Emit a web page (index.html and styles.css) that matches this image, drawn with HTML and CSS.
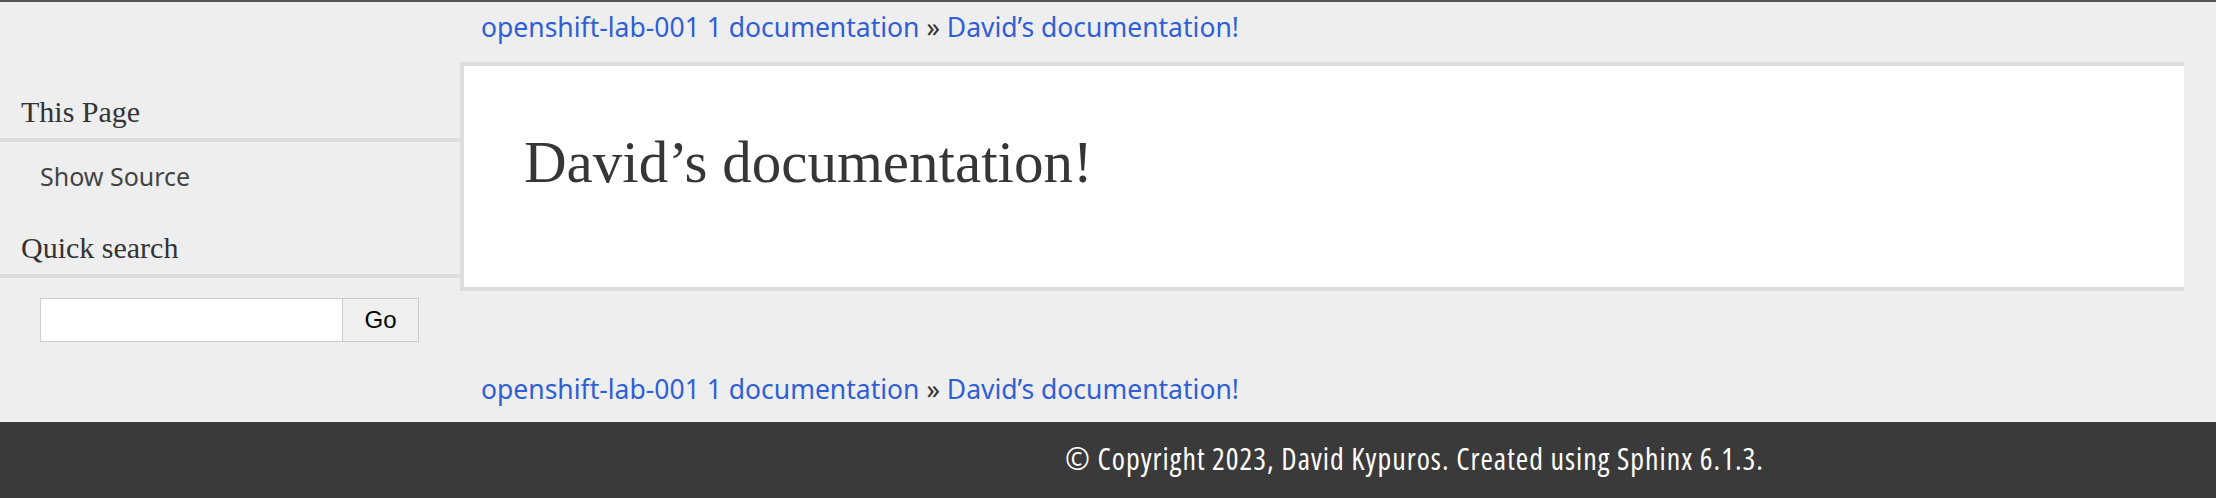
FILE: index.html
```html
<!DOCTYPE html>
<html lang="en">
<head>
<meta charset="utf-8">
<title>David’s documentation! — openshift-lab-001 1 documentation</title>
<link rel="stylesheet" href="styles.css">
</head>
<body>
<div class="related">
  <a href="#">openshift-lab-001 1 documentation</a> <span class="sep">»</span> <a href="#">David’s documentation!</a>
</div>
<div class="main">
  <aside class="sidebar">
    <h3 class="side-title">This Page</h3>
    <ul class="side-list">
      <li><a href="#">Show Source</a></li>
    </ul>
    <h3 class="side-title side-title-2">Quick search</h3>
    <form class="search">
      <input class="search-input" type="text" aria-label="search">
      <button class="search-btn" type="button">Go</button>
    </form>
  </aside>
  <section class="document">
    <h1 class="doc-title">David’s documentation!</h1>
  </section>
</div>
<div class="related related-bottom">
  <a href="#">openshift-lab-001 1 documentation</a> <span class="sep">»</span> <a href="#">David’s documentation!</a>
</div>
<footer class="footer">© Copyright 2023, David Kypuros. Created using Sphinx 6.1.3.</footer>
</body>
</html>
```
FILE: styles.css
```css
html, body {
  margin: 0;
  padding: 0;
}
body {
  background: #eeeeee;
  border-top: 2px solid #555555;
  font-family: "Noto Sans", "Open Sans", sans-serif;
  color: #333333;
}
a {
  color: #2f5fd6;
  text-decoration: none;
}
.related {
  padding: 8px 32px 18px 481px;
  font-size: 26.5px;
  line-height: 34px;
  white-space: nowrap;
}
.related .sep {
  color: #333333;
}
.related-bottom {
  padding-top: 30px;
  padding-bottom: 16px;
}
.main {
  display: flex;
  align-items: flex-start;
  margin-right: 32px;
}
.sidebar {
  width: 460px;
  flex: none;
}
.side-title {
  margin: 30px 0 0 0;
  padding: 0 0 6px 21px;
  font-family: "Liberation Serif", serif;
  font-weight: normal;
  font-size: 30px;
  line-height: 40px;
  color: #333333;
  border-bottom: 4px solid #dddddd;
}
.side-title-2 {
  margin-top: 34px;
}
.side-list {
  list-style: none;
  margin: 16px 0 0 0;
  padding: 0 0 0 40px;
  font-size: 25px;
  line-height: 36px;
}
.side-list a {
  color: #444444;
}
.search {
  display: flex;
  margin: 20px 0 0 40px;
}
.search-input {
  box-sizing: border-box;
  width: 303px;
  height: 44px;
  margin: 0;
  border: 1px solid #cccccc;
  background: #ffffff;
}
.search-btn {
  box-sizing: border-box;
  width: 76px;
  height: 44px;
  margin: 0;
  border: 1px solid #cccccc;
  border-left: none;
  background: #efefef;
  font-family: "Liberation Sans", Arial, sans-serif;
  font-size: 24px;
  color: #000000;
}
.document {
  flex: 1;
  background: #ffffff;
  border-top: 4px solid #dddddd;
  border-bottom: 4px solid #dddddd;
  border-left: 4px solid #dddddd;
  padding: 61px 60px 90px 60px;
}
.doc-title {
  margin: 0;
  font-family: "Liberation Serif", serif;
  font-weight: normal;
  font-size: 59px;
  line-height: 70px;
  color: #363636;
}
.footer {
  background: #3a3a3a;
  color: #ffffff;
  height: 76px;
  box-sizing: border-box;
  padding: 20px 0 0 1065px;
  font-family: "Open Sans", sans-serif;
  font-stretch: 80%;
  font-size: 30px;
  letter-spacing: 1px;
  line-height: 34px;
  white-space: nowrap;
}
```
